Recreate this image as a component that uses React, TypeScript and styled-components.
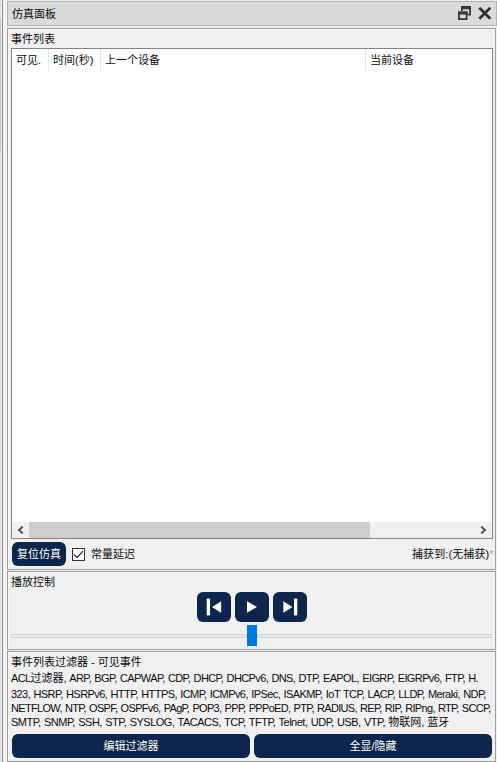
import React from "react";
import styled, { createGlobalStyle } from "styled-components";

const navy = "#0e264b";

const GlobalStyle = createGlobalStyle`
  * { box-sizing: border-box; }
  body {
    margin: 0;
    background: #f0f0f0;
    color: #0c0c0c;
    font: 11px/14px "Liberation Sans", "Noto Sans CJK SC", sans-serif;
    white-space: nowrap;
    overflow: hidden;
  }
`;

const Window = styled.main`
  display: flex;
  width: 497px;
  height: 762px;
`;

const Gutter = styled.div`
  flex: none;
  width: 7px;
  border-left: 1px solid #e3e3e3;
  background: linear-gradient(90deg, #f0f0f0 1px, #8c8c8c 1px, #8c8c8c 2px, #f2f2f2 2px);
`;

const GutterThumb = styled.div`
  width: 1px;
  height: 133px;
  margin: 18px 0 0 -1px;
  background: #c6c6c6;
`;

const Dock = styled.div`
  width: 490px;
  padding-top: 1px;
  display: flex;
  flex-direction: column;
  gap: 1px;
`;

const TitleBar = styled.header`
  flex: none;
  height: 25px;
  margin-bottom: 1px;
  display: flex;
  align-items: center;
  justify-content: space-between;
  padding: 0 4px 0 4px;
  border: 1px solid #b5b5b5;
  background: #dadada;
`;

const TitleIcons = styled.div`
  display: flex;
  gap: 6px;
`;

const Group = styled.section<{ $height: number }>`
  flex: none;
  width: 489px;
  height: ${(p) => p.$height}px;
  padding: 3px 3px 0;
  border: 1px solid #9c9c9c;
  box-shadow: inset 1px 1px #fafafa;
`;

const Heading = styled.h2`
  margin: 0;
  height: 14px;
  font-size: 11px;
  font-weight: 400;
`;

const Table = styled.div`
  width: 482px;
  height: 491px;
  margin-top: 2px;
  border: 1px solid #858585;
  background: #fff;
  display: flex;
  flex-direction: column;
  justify-content: space-between;
`;

const TableHead = styled.div`
  display: grid;
  grid-template-columns: 37px 52px 265px 1fr;
  height: 22px;
`;

const Column = styled.div`
  padding: 4px 0 0 4px;
  border-right: 1px solid #e4e4e4;
  &:last-child { border: 0; }
`;

const ScrollBar = styled.div`
  height: 16px;
  display: grid;
  grid-template-columns: 17px 1fr 17px;
  align-items: center;
  justify-items: center;
  background: #f0f0f0;
`;

const Thumb = styled.div`
  justify-self: start;
  width: 341px;
  height: 16px;
  background: #cdcdcd;
`;

const StatusRow = styled.div`
  display: flex;
  align-items: center;
  height: 24px;
  margin-top: 3px;
  padding-left: 1px;
`;

const Button = styled.button<{ $width: number; $height: number }>`
  display: flex;
  align-items: center;
  justify-content: center;
  width: ${(p) => p.$width}px;
  height: ${(p) => p.$height}px;
  padding: 0;
  border: 0;
  border-radius: 6px;
  background: ${navy};
  color: #fff;
  font: inherit;
`;

const CheckBox = styled.span`
  display: flex;
  width: 13px;
  height: 13px;
  margin: 0 6px;
  border: 1px solid #333;
  background: #fff;
`;

const Captured = styled.span`
  margin-left: auto;
  width: 80px;
  letter-spacing: 0.1px;
  i { color: #aaa; font-style: normal; }
`;

const Transport = styled.div`
  display: flex;
  justify-content: center;
  gap: 4px;
  margin-top: 3px;
`;

const Slider = styled.div`
  display: flex;
  align-items: center;
  height: 21px;
  margin-top: 3px;
`;

const Rail = styled.div<{ $width: number }>`
  width: ${(p) => p.$width}px;
  height: 4px;
  border: 1px solid #d3d3d3;
  background: #e9e9e9;
`;

const Handle = styled.div`
  width: 10px;
  height: 21px;
  background: #0078d7;
`;

const FilterText = styled.div`
  padding-top: 2px;
  word-spacing: 0.8px;
`;

const FilterLine = styled.div<{ $spacing: number; $height: number }>`
  height: ${(p) => p.$height}px;
  letter-spacing: ${(p) => p.$spacing}px;
`;

const Hanzi = styled.span`
  letter-spacing: 0;
`;

const ButtonRow = styled.div`
  display: flex;
  gap: 4px;
  margin-top: 5px;
  padding-left: 1px;
`;

const filters = [
  { text: "ACL过滤器, ARP, BGP, CAPWAP, CDP, DHCP, DHCPv6, DNS, DTP, EAPOL, EIGRP, EIGRPv6, FTP, H.", spacing: -0.61, height: 16 },
  { text: "323, HSRP, HSRPv6, HTTP, HTTPS, ICMP, ICMPv6, IPSec, ISAKMP, IoT TCP, LACP, LLDP, Meraki, NDP,", spacing: -0.575, height: 14 },
  { text: "NETFLOW, NTP, OSPF, OSPFv6, PAgP, POP3, PPP, PPPoED, PTP, RADIUS, REP, RIP, RIPng, RTP, SCCP,", spacing: -0.68, height: 14 },
  { text: "SMTP, SNMP, SSH, STP, SYSLOG, TACACS, TCP, TFTP, Telnet, UDP, USB, VTP, 物联网, 蓝牙", spacing: -0.505, height: 14 },
];

const StepIcon = ({ forward = false }: { forward?: boolean }) => (
  <svg width="16" height="18" viewBox="0 0 16 18" fill="#fff">
    {forward ? (
      <><path d="M1.3 3.2 10.5 9 1.3 14.8Z" /><rect x="12" y="0.5" width="3.3" height="17" rx=".7" /></>
    ) : (
      <><path d="M15.2 3.2 6 9 15.2 14.8Z" /><rect x="0.7" y="0.5" width="3.3" height="17" rx=".7" /></>
    )}
  </svg>
);

export default function App() {
  return (
    <>
      <GlobalStyle />
      <Window>
        <Gutter><GutterThumb /></Gutter>
        <Dock>
          <TitleBar>
            <span>仿真面板</span>
            <TitleIcons>
              <svg width="15" height="15" viewBox="0 0 15 15" fill="none" stroke="#383838" strokeWidth="1.8">
                <path d="M4.9 5V1H13.1V8.6H10.5" />
                <path d="M4 1.8H14" strokeWidth="3" />
                <rect x="1.9" y="6.5" width="7.7" height="6.6" />
                <path d="M1 7H10.5" strokeWidth="3" />
              </svg>
              <svg width="14" height="14" viewBox="0 0 14 14" stroke="#303030" strokeWidth="2.7">
                <path d="M1.3 1.7 12.3 12.7M12.3 1.7 1.3 12.7" />
              </svg>
            </TitleIcons>
          </TitleBar>
          <Group $height={542}>
            <Heading>事件列表</Heading>
            <Table>
              <TableHead>
                <Column>可见.</Column>
                <Column>时间(秒)</Column>
                <Column>上一个设备</Column>
                <Column>当前设备</Column>
              </TableHead>
              <ScrollBar>
                <svg width="7" height="8" fill="none" stroke="#505050" strokeWidth="2"><path d="M5.7.5 2 4 5.7 7.5" /></svg>
                <Thumb />
                <svg width="7" height="8" fill="none" stroke="#505050" strokeWidth="2"><path d="M1.3.5 5 4 1.3 7.5" /></svg>
              </ScrollBar>
            </Table>
            <StatusRow>
              <Button $width={54} $height={24}>复位仿真</Button>
              <CheckBox>
                <svg width="11" height="11" fill="none" stroke="#222" strokeWidth="1.2"><path d="M1 5.5 4 8.5 10 2.2" /></svg>
              </CheckBox>
              <span>常量延迟</span>
              <Captured>捕获到:(无捕获)<i>*</i></Captured>
            </StatusRow>
          </Group>
          <Group $height={79}>
            <Heading>播放控制</Heading>
            <Transport>
              <Button $width={34} $height={30} aria-label="Back"><StepIcon /></Button>
              <Button $width={34} $height={30} aria-label="Play">
                <svg width="10" height="12" fill="#fff"><path d="M0 .3 10 6 0 11.7Z" /></svg>
              </Button>
              <Button $width={34} $height={30} aria-label="Forward"><StepIcon forward /></Button>
            </Transport>
            <Slider>
              <Rail $width={236} />
              <Handle />
              <Rail $width={236} />
            </Slider>
          </Group>
          <Group $height={111}>
            <Heading>事件列表过滤器 - 可见事件</Heading>
            <FilterText>
              {filters.map((line) => (
                <FilterLine key={line.text} $spacing={line.spacing} $height={line.height}>
                  {line.text.split(/([\u4e00-\u9fff]+)/).map((part, i) =>
                    i % 2 ? <Hanzi key={i}>{part}</Hanzi> : part
                  )}
                </FilterLine>
              ))}
            </FilterText>
            <ButtonRow>
              <Button $width={238} $height={24}>编辑过滤器</Button>
              <Button $width={238} $height={24}>全显/隐藏</Button>
            </ButtonRow>
          </Group>
        </Dock>
      </Window>
    </>
  );
}
